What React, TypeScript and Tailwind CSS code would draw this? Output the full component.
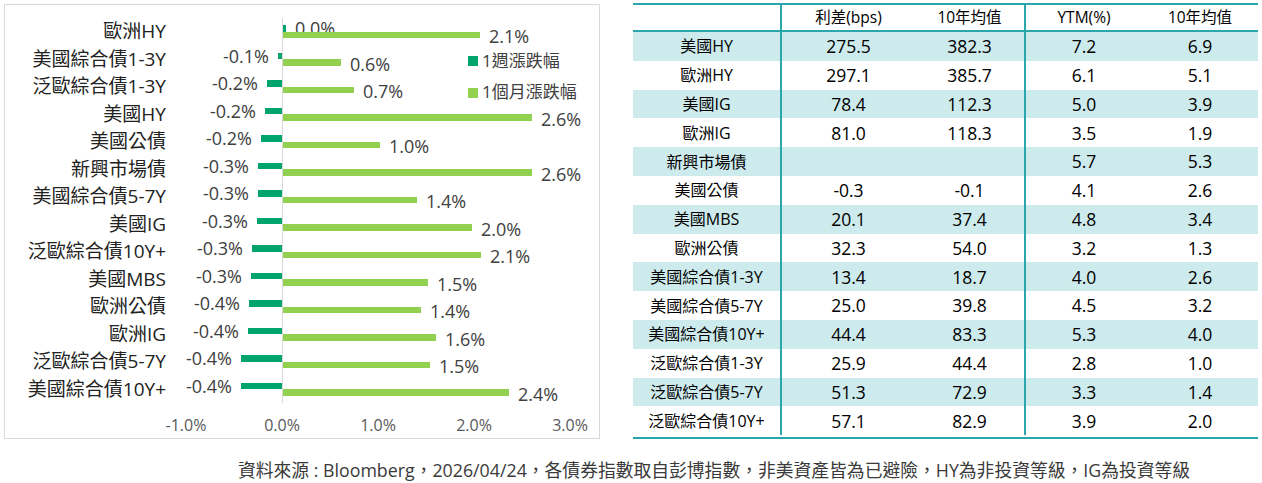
import React from 'react';

// 1週 / 1個月 漲跌幅 (bar lengths in px, 1% ≈ 96px)
const perf = [
  { name: '歐洲HY', week: '0.0%', wk: 2.5, up: true, month: '2.1%', mo: 197 },
  { name: '美國綜合債1-3Y', week: '-0.1%', wk: 4, month: '0.6%', mo: 58 },
  { name: '泛歐綜合債1-3Y', week: '-0.2%', wk: 15, month: '0.7%', mo: 71 },
  { name: '美國HY', week: '-0.2%', wk: 17, month: '2.6%', mo: 249 },
  { name: '美國公債', week: '-0.2%', wk: 21, month: '1.0%', mo: 97 },
  { name: '新興市場債', week: '-0.3%', wk: 24, month: '2.6%', mo: 249 },
  { name: '美國綜合債5-7Y', week: '-0.3%', wk: 24, month: '1.4%', mo: 134 },
  { name: '美國IG', week: '-0.3%', wk: 25, month: '2.0%', mo: 189 },
  { name: '泛歐綜合債10Y+', week: '-0.3%', wk: 30, month: '2.1%', mo: 198 },
  { name: '美國MBS', week: '-0.3%', wk: 31, month: '1.5%', mo: 145 },
  { name: '歐洲公債', week: '-0.4%', wk: 33, month: '1.4%', mo: 138 },
  { name: '歐洲IG', week: '-0.4%', wk: 34, month: '1.6%', mo: 153 },
  { name: '泛歐綜合債5-7Y', week: '-0.4%', wk: 41, month: '1.5%', mo: 147 },
  { name: '美國綜合債10Y+', week: '-0.4%', wk: 41, month: '2.4%', mo: 226 },
];

const spreads = [
  ['美國HY', '275.5', '382.3', '7.2', '6.9'],
  ['歐洲HY', '297.1', '385.7', '6.1', '5.1'],
  ['美國IG', '78.4', '112.3', '5.0', '3.9'],
  ['歐洲IG', '81.0', '118.3', '3.5', '1.9'],
  ['新興市場債', '', '', '5.7', '5.3'],
  ['美國公債', '-0.3', '-0.1', '4.1', '2.6'],
  ['美國MBS', '20.1', '37.4', '4.8', '3.4'],
  ['歐洲公債', '32.3', '54.0', '3.2', '1.3'],
  ['美國綜合債1-3Y', '13.4', '18.7', '4.0', '2.6'],
  ['美國綜合債5-7Y', '25.0', '39.8', '4.5', '3.2'],
  ['美國綜合債10Y+', '44.4', '83.3', '5.3', '4.0'],
  ['泛歐綜合債1-3Y', '25.9', '44.4', '2.8', '1.0'],
  ['泛歐綜合債5-7Y', '51.3', '72.9', '3.3', '1.4'],
  ['泛歐綜合債10Y+', '57.1', '82.9', '3.9', '2.0'],
];

const ZERO = 116; // zero line inside the plot cell

const PerfChart: React.FC = () => (
  <div className="relative ml-[4px] mt-[1px] h-[435px] w-[596px] border border-[#d9d9d9] pt-[13px]">
    <div className="relative">
      {/* 0% axis */}
      <div className="absolute left-[277px] top-0 h-[385px] w-px bg-[#d9d9d9]" />
      {perf.map((r) => (
        <div key={r.name} className="flex h-[27.5px]">
          <div className="w-[161px] whitespace-nowrap text-right text-[19px] leading-[27.5px] text-[#222]">
            {r.name}
          </div>
          <div className="relative w-[420px] pt-[7px]">
            <div className="relative h-[6.7px]">
              <div
                className="absolute top-0 h-full bg-[#00a46c]"
                style={r.up ? { left: ZERO + 1, width: r.wk } : { left: ZERO - r.wk, width: r.wk }}
              />
              <span
                className="absolute top-1/2 -translate-y-1/2 whitespace-nowrap text-[18px] leading-none text-[#404040]"
                style={r.up ? { left: ZERO + 13 } : { right: 420 - (ZERO - r.wk) + 9 }}
              >
                {r.week}
              </span>
            </div>
            <div className="relative h-[6.7px]">
              <div className="absolute top-0 h-full bg-[#92d050]" style={{ left: ZERO + 1, width: r.mo }} />
              <span
                className="absolute top-1/2 -translate-y-1/2 whitespace-nowrap pt-[1px] text-[18px] leading-none text-[#404040]"
                style={{ left: ZERO + 1 + r.mo + 9 }}
              >
                {r.month}
              </span>
            </div>
          </div>
        </div>
      ))}
    </div>

    {/* x axis */}
    <div className="ml-[133px] mt-[11px] grid grid-cols-[96px_96px_96px_96px_96px] text-center text-[16px] leading-[22px] text-[#595959]">
      <span>-1.0%</span>
      <span>0.0%</span>
      <span>1.0%</span>
      <span>2.0%</span>
      <span>3.0%</span>
    </div>

    {/* legend */}
    <div className="absolute left-[463px] top-[44px] flex flex-col gap-[7px] text-[17px] leading-[24px] text-[#404040]">
      <div className="flex items-center gap-[4px]">
        <span className="h-[10px] w-[10px] bg-[#00a46c]" />
        <span>1週漲跌幅</span>
      </div>
      <div className="flex items-center gap-[4px]">
        <span className="mt-[2px] h-[10px] w-[10px] bg-[#92d050]" />
        <span>1個月漲跌幅</span>
      </div>
    </div>
  </div>
);

const SpreadTable: React.FC = () => (
  <div className="ml-[33px] w-[625px] border-y-2 border-[#2aa6ac] text-black">
    <div className="flex h-[27px] items-center border-b-2 border-[#2aa6ac] text-[15.5px]">
      <div className="h-full w-[149px] border-r-2 border-[#2aa6ac]" />
      <div className="w-[121px] pl-[12px] text-center">利差(bps)</div>
      <div className="flex h-full w-[123px] items-center justify-center border-r-2 border-[#2aa6ac] pl-[12px]">
        10年均值
      </div>
      <div className="w-[116px] text-center">YTM(%)</div>
      <div className="w-[116px] text-center">10年均值</div>
    </div>
    {spreads.map((r, i) => (
      <div key={r[0]} className={`flex h-[28.8px] items-center ${i % 2 === 0 ? 'bg-[#cdeaec]' : 'bg-white'}`}>
        <div className="flex h-full w-[149px] items-center justify-center border-r-2 border-[#2aa6ac] text-[16px]">
          {r[0]}
        </div>
        <div className="w-[121px] pl-[12px] text-center text-[17.5px]">{r[1]}</div>
        <div className="flex h-full w-[123px] items-center justify-center border-r-2 border-[#2aa6ac] pl-[12px] text-[17.5px]">
          {r[2]}
        </div>
        <div className="w-[116px] text-center text-[17.5px]">{r[3]}</div>
        <div className="w-[116px] text-center text-[17.5px]">{r[4]}</div>
      </div>
    ))}
  </div>
);

export default function App() {
  return (
    <div className="h-[483px] w-[1262px] overflow-hidden bg-white font-[family-name:'Open_Sans','Noto_Sans_CJK_TC',sans-serif]">
      <div className="flex pt-[3px]">
        <PerfChart />
        <SpreadTable />
      </div>
      <div className="mt-[19px] whitespace-nowrap pl-[238px] text-[17.8px] leading-[24px] text-[#3a3a3a]">
        資料來源 : Bloomberg，2026/04/24，各債券指數取自彭博指數，非美資產皆為已避險，HY為非投資等級，IG為投資等級
      </div>
    </div>
  );
}
